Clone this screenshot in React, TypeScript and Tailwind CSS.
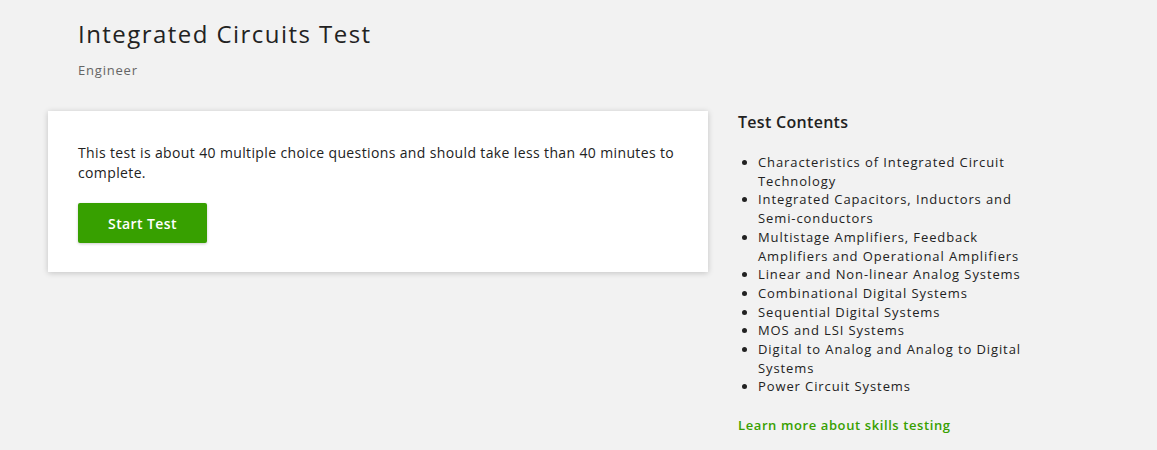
const topics = [
  "Characteristics of Integrated Circuit Technology",
  "Integrated Capacitors, Inductors and Semi-conductors",
  "Multistage Amplifiers, Feedback Amplifiers and Operational Amplifiers",
  "Linear and Non-linear Analog Systems",
  "Combinational Digital Systems",
  "Sequential Digital Systems",
  "MOS and LSI Systems",
  "Digital to Analog and Analog to Digital Systems",
  "Power Circuit Systems",
];

export default function App() {
  return (
    <div className="min-h-[450px] w-full bg-[#f2f2f2] font-['Open_Sans',sans-serif] text-[#222]">
      <div className="pl-[78px] pt-[18px]">
        <h1 className="text-[24px] leading-[32px] tracking-[1.45px] text-[#222]">
          Integrated Circuits Test
        </h1>
        <p className="mt-[12px] text-[13px] leading-[16px] tracking-[0.8px] text-[#656565]">
          Engineer
        </p>
      </div>

      <div className="mt-[33px] flex items-start gap-[30px] pl-[48px]">
        <div className="w-[660px] bg-white px-[30px] pt-[32px] pb-[29px] shadow-[0_1px_6px_rgba(0,0,0,0.2)]">
          <p className="text-[14px] leading-[20px] tracking-[0.37px] text-[#222]">
            This test is about 40 multiple choice questions and should take less
            than 40 minutes to complete.
          </p>
          <button className="mt-[20px] h-[40px] w-[129px] rounded-[2px] bg-[#37a000] text-[14px] font-semibold tracking-[0.4px] text-white shadow-[0_1px_3px_rgba(0,0,0,0.2)]">
            Start Test
          </button>
        </div>

        <div className="w-[300px] pt-[1px]">
          <h2 className="text-[16px] leading-[20px] font-semibold tracking-[0.3px] text-[#222]">
            Test Contents
          </h2>
          <ul className="mt-[21px] list-disc pl-[20px] text-[13px] leading-[18.7px] tracking-[0.9px] text-[#222]">
            {topics.map((t) => (
              <li key={t}>{t}</li>
            ))}
          </ul>
          <a
            href="#"
            className="mt-[20px] block text-[13px] leading-[18px] font-semibold tracking-[0.6px] text-[#37a000]"
          >
            Learn more about skills testing
          </a>
        </div>
      </div>
    </div>
  );
}
